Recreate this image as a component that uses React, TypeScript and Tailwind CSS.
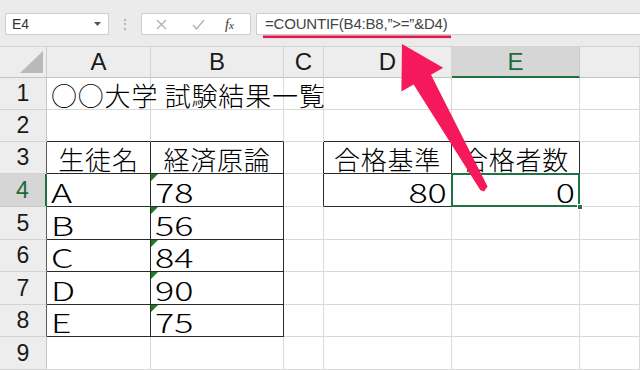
import React from "react";

const cellFont = { fontFamily: '"Noto Sans CJK JP", "Noto Sans", sans-serif' };

type C = {
  t?: string;
  align?: "l" | "c" | "r";
  rb?: string;
  bb?: string;
  tri?: boolean;
  sel?: boolean;
};

const G = "border-r-[#d9d9d9]";
const GB = "border-b-[#d9d9d9]";
const K = "border-r-[#2a2a2a]";
const KB = "border-b-[#2a2a2a]";

function Cell({ c }: { c: C }) {
  const al = c.align === "c" ? "justify-center" : c.align === "r" ? "justify-end pr-[4px]" : "justify-start pl-[4px]";
  const latin = !!c.t && /^[A-Za-z0-9]+$/.test(c.t);
  const scale = latin
    ? c.align === "r"
      ? "inline-block scale-x-[1.38] origin-right"
      : "inline-block scale-x-[1.38] origin-left"
    : "tracking-[0.8px]";
  return (
    <div className={`relative flex items-end pb-[1px] border-r border-b bg-white ${c.rb ?? G} ${c.bb ?? GB} ${al}`}>
      {c.t && (
        <span
          className={`relative z-10 text-[26px] leading-none font-light text-black whitespace-nowrap ${scale}`}
          style={cellFont}
        >
          {c.t}
        </span>
      )}
      {c.tri && (
        <svg className="absolute left-0 top-0" width="7" height="7" viewBox="0 0 7 7">
          <polygon points="0,0 7,0 0,7" fill="#1f7a22" />
        </svg>
      )}
      {c.sel && (
        <>
          <div className="absolute inset-[-1px] border-2 border-[#217346]" />
          <div className="absolute right-[-4px] bottom-[-4px] w-[6px] h-[6px] bg-[#217346] border border-white z-20" />
        </>
      )}
    </div>
  );
}

export default function App() {
  const rows: C[][] = [
    [{ t: "○○大学 試験結果一覧" }, {}, {}, {}, {}, {}],
    [{ bb: KB }, { bb: KB }, {}, { bb: KB }, { bb: KB }, {}],
    [
      { t: "生徒名", align: "c", rb: K, bb: KB },
      { t: "経済原論", align: "c", rb: K, bb: KB },
      { rb: K },
      { t: "合格基準", align: "c", rb: K, bb: KB },
      { t: "合格者数", align: "c", rb: K, bb: KB },
      {},
    ],
    [
      { t: "A", rb: K, bb: KB },
      { t: "78", rb: K, bb: KB, tri: true },
      { rb: K },
      { t: "80", align: "r", rb: K, bb: KB },
      { t: "0", align: "r", rb: K, bb: KB, sel: true },
      {},
    ],
    [{ t: "B", rb: K, bb: KB }, { t: "56", rb: K, bb: KB, tri: true }, {}, {}, {}, {}],
    [{ t: "C", rb: K, bb: KB }, { t: "84", rb: K, bb: KB, tri: true }, {}, {}, {}, {}],
    [{ t: "D", rb: K, bb: KB }, { t: "90", rb: K, bb: KB, tri: true }, {}, {}, {}, {}],
    [{ t: "E", rb: K, bb: KB }, { t: "75", rb: K, bb: KB, tri: true }, {}, {}, {}, {}],
    [{}, {}, {}, {}, {}, {}],
  ];
  const cols = ["A", "B", "C", "D", "E", ""];

  return (
    <div className="relative w-[640px] h-[370px] overflow-hidden bg-white">
      {/* toolbar */}
      <div
        className="h-[47px] flex items-start pt-[13px] bg-[#ebebeb] border-b border-[#d4d4d4]"
        style={{ fontFamily: '"Liberation Sans", Arial, sans-serif' }}
      >
        <div className="ml-[5px] w-[104px] h-[22px] bg-white border border-[#cfcfcf] flex items-center justify-between pl-[6px] pr-[7px]">
          <span className="text-[14px] text-[#333]">E4</span>
          <svg width="7" height="4" viewBox="0 0 7 4">
            <polygon points="0,0 7,0 3.5,4" fill="#555" />
          </svg>
        </div>
        <div className="w-[32px] h-[22px] flex flex-col items-center justify-center gap-[2.5px]">
          <div className="w-[2px] h-[2px] bg-[#a5a5a5] rounded-full" />
          <div className="w-[2px] h-[2px] bg-[#a5a5a5] rounded-full" />
          <div className="w-[2px] h-[2px] bg-[#a5a5a5] rounded-full" />
        </div>
        <div className="w-[110px] h-[22px] bg-white border border-[#cfcfcf] flex items-center">
          <svg className="ml-[14px]" width="11" height="11" viewBox="0 0 11 11">
            <path d="M1 1 L10 10 M10 1 L1 10" stroke="#b3b3b3" strokeWidth="1.4" />
          </svg>
          <svg className="ml-[25px]" width="13" height="11" viewBox="0 0 13 11">
            <path d="M1 6 L4.5 10 L12 1" stroke="#b3b3b3" strokeWidth="1.4" fill="none" />
          </svg>
          <span
            className="ml-[20px] text-[14px] italic text-[#333]"
            style={{ fontFamily: '"Liberation Serif", "Times New Roman", serif' }}
          >
            f<span className="text-[11px]">x</span>
          </span>
        </div>
        <div className="ml-[5px] flex-1 h-[22px] bg-white border border-[#cfcfcf] border-r-0 flex items-center pl-[8px]">
          <span className="text-[15px] text-[#444] tracking-[-0.2px]">=COUNTIF(B4:B8,”&gt;=”&amp;D4)</span>
        </div>
      </div>

      {/* grid */}
      <div
        className="grid grid-cols-[47px_104px_133px_40px_128px_128px_60px] grid-rows-[31px_32px_32px_32px_33px_33px_32px_33px_32px_33px]"
        style={{ fontFamily: '"Liberation Sans", Arial, sans-serif' }}
      >
        <div className="relative bg-[#ededed] border-r border-b border-r-[#cfcfcf] border-b-[#c4c4c4]">
          <svg className="absolute right-[3px] bottom-[4px]" width="23" height="22" viewBox="0 0 23 22">
            <polygon points="0,22 23,22 23,0" fill="#b9b9b9" />
          </svg>
        </div>
        {cols.map((c, i) =>
          c === "E" ? (
            <div
              key={i}
              className="flex items-center justify-center bg-[#d6d6d6] border-r border-r-[#c8c8c8] border-b-2 border-b-[#217346] text-[24px] text-[#1d6a3a]"
            >
              {c}
            </div>
          ) : (
            <div
              key={i}
              className="flex items-center justify-center bg-[#ededed] border-r border-b border-r-[#d4d4d4] border-b-[#c4c4c4] text-[24px] text-[#1a1a1a]"
            >
              {c}
            </div>
          )
        )}
        {rows.map((r, ri) => (
          <React.Fragment key={ri}>
            {ri === 3 ? (
              <div className="flex items-center justify-center bg-[#d6d6d6] border-r-2 border-b border-r-[#217346] border-b-[#c9c9c9] text-[23px] text-[#1d6a3a]">
                {ri + 1}
              </div>
            ) : (
              <div
                className={`flex items-center justify-center bg-[#ededed] border-r border-b border-b-[#d2d2d2] text-[23px] text-[#1a1a1a] ${
                  ri >= 2 && ri <= 7 ? "border-r-[#5a5a5a]" : "border-r-[#c6c6c6]"
                }`}
              >
                {ri + 1}
              </div>
            )}
            {r.map((c, ci) => (
              <Cell key={ci} c={c} />
            ))}
          </React.Fragment>
        ))}
      </div>

      {/* annotations */}
      <svg className="absolute left-0 top-0 pointer-events-none z-30" width="640" height="370" viewBox="0 0 640 370">
        <rect x="263" y="35.5" width="188" height="2.6" fill="#e5174f" />
        <polygon
          points="402,44 443.2,67.7 431,74.7 487.6,186.4 484,191.5 480.4,190.2 413.6,84.5 401.4,91.5"
          fill="#f5195b"
        />
      </svg>
    </div>
  );
}
